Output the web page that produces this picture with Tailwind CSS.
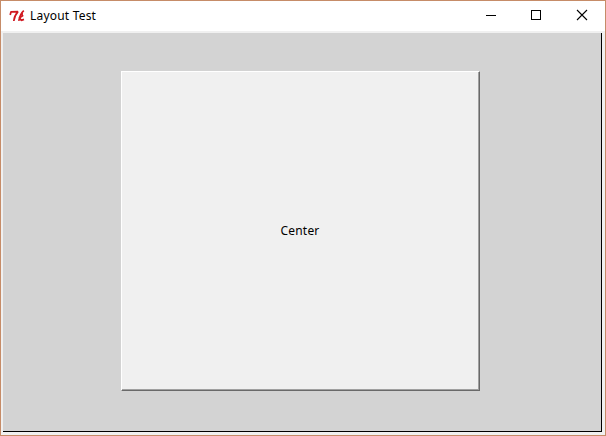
<!DOCTYPE html>
<html lang="en">
<head>
<meta charset="utf-8">
<title>Layout Test</title>
<script src="https://cdn.jsdelivr.net/npm/@tailwindcss/browser@4"></script>
</head>
<body class="overflow-hidden font-['Noto_Sans','Open_Sans',sans-serif] text-[12px] tracking-[0.2px] text-black">
<div class="flex h-[436px] w-[606px] flex-col border border-[#c68c68] bg-white">
  <header class="flex h-[30px] shrink-0 items-center bg-white">
    <svg class="ml-[8px] h-4 w-4 shrink-0" viewBox="0 0 16 16" fill="none" stroke="#d01820" stroke-linejoin="bevel">
      <path d="M1.2 7 2 3.8 9 3.6C6.8 6 5.2 9 4.8 13" stroke-width="1.7"/>
      <path d="M14.8 2.6C12.6 4.5 10.6 8 9.8 12.8M9.8 10.4 14.2 7.2 10.6 9.6 12.2 12.4 15 11.4M13.2 4.2 13 7" stroke-width="1.7"/>
    </svg>
    <h1 class="ml-[5px] whitespace-nowrap leading-4">Layout Test</h1>
    <div class="ml-auto flex items-center" aria-label="Window controls">
      <svg class="h-[30px] w-[45px]" viewBox="0 0 45 30" shape-rendering="crispEdges"><path d="M16 14h10v1H16z"/></svg>
      <svg class="h-[30px] w-[46px]" viewBox="0 0 46 30" fill="none" stroke="#000" shape-rendering="crispEdges"><path d="M16.5 9.5h9v9h-9z"/></svg>
      <svg class="h-[30px] w-[44px]" viewBox="0 0 44 30" fill="none" stroke="#000" stroke-width="1.1"><path d="m16 9 10 10M26 9 16 19"/></svg>
    </div>
  </header>
  <main class="flex grow flex-col bg-[#f0f0f0] pt-[2px] pr-[3px] pb-[3px] pl-[2px]">
    <div class="flex grow items-start border-r border-b border-black bg-[#d3d3d3] pt-[38px] pl-[118px]">
      <button class="flex h-[320px] w-[359px] border-t border-r border-b border-l border-t-white border-l-white border-r-[#696969] border-b-[#696969]">
        <span class="flex h-full w-full items-center justify-center border-r border-b border-[#a0a0a0] bg-[#f0f0f0] leading-4">Center</span>
      </button>
    </div>
  </main>
</div>
</body>
</html>
